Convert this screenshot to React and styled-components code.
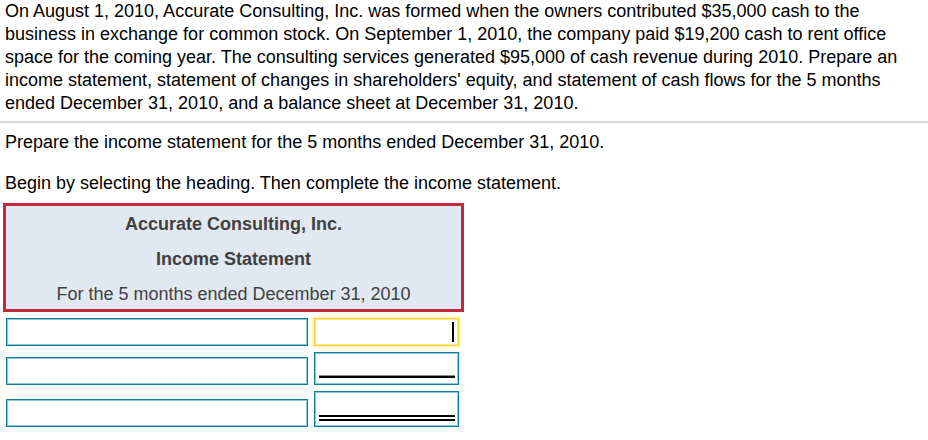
import React from 'react';
import styled, { createGlobalStyle } from "styled-components"

const GlobalStyle = createGlobalStyle`
    body {
        margin: 0;
        background: #ffffff;
        font-family: Arial, "Liberation Sans", sans-serif;
        color: #000000;
    }
`

const Page = styled.div`
    width: 928px;
    height: 440px;
    overflow: hidden;
`

const Problem = styled.p`
    margin: 0;
    padding: 0 5px;
    font-size: 18px;
    line-height: 23px;
`

const Divider = styled.hr`
    margin: 6px 0 0 0;
    border: 0;
    border-top: 2px solid #d3d6e0;
`

const Instruction = styled.p`
    margin: ${props => props.$top}px 0 0 0;
    padding: 0 5px;
    font-size: 18px;
    line-height: 23px;
`

const HeadingBox = styled.div`
    margin: 8px 0 0 3px;
    width: 461px;
    height: 109px;
    box-sizing: border-box;
    border: 3px solid #c4283b;
    background: #e1e8f2;
    padding: 1px 0 0 0;
    display: flex;
    flex-direction: column;
`

const HeadingLine = styled.div`
    height: ${props => props.$h}px;
    line-height: 35px;
    text-align: center;
    font-size: 18px;
    font-weight: ${props => props.$bold ? 700 : 400};
    color: #404040;
    white-space: nowrap;
`

const Rows = styled.div`
    margin: 6px 0 0 6px;
    display: flex;
    flex-direction: column;
    gap: 6px;
`

const Row = styled.div`
    display: flex;
    align-items: flex-end;
    gap: 6px;
`

const Field = styled.div`
    box-sizing: border-box;
    width: ${props => props.$width}px;
    height: ${props => props.$height}px;
    border: 1px solid #0e7c9c;
    box-shadow: inset 0 0 0 1px #8fc6d8;
    background: #ffffff;
`

const AmountField = styled(Field)`
    display: flex;
    flex-direction: column;
    justify-content: flex-end;
    padding: 0 3px ${props => props.$rulePad}px 4px;
`

const FocusField = styled.div`
    box-sizing: border-box;
    width: 145px;
    height: 28px;
    border: 1px solid #f2d43c;
    box-shadow: 0 0 3px 1px #fbe98a, inset 0 0 0 1px #fbe98a;
    background: #ffffff;
    display: flex;
    align-items: center;
    justify-content: flex-end;
    padding-right: 4px;
`

const Caret = styled.span`
    width: 2px;
    height: 20px;
    background: #000000;
`

const SingleRule = styled.div`
    border-top: 1px solid #8a8a8a;
    border-bottom: 2px solid #000000;
`

const DoubleRule = styled.div`
    height: 2px;
    border-top: 2px solid #000000;
    border-bottom: 2px solid #000000;
`

const App = () => {
    return (
        <Page>
            <GlobalStyle />
            <Problem>
                On August 1, 2010, Accurate Consulting, Inc. was formed when the owners contributed $35,000 cash to the
                business in exchange for common stock. On September 1, 2010, the company paid $19,200 cash to rent office
                space for the coming year. The consulting services generated $95,000 of cash revenue during 2010. Prepare an
                income statement, statement of changes in shareholders' equity, and statement of cash flows for the 5 months
                ended December 31, 2010, and a balance sheet at December 31, 2010.
            </Problem>
            <Divider />
            <Instruction $top={8}>Prepare the income statement for the 5 months ended December 31, 2010.</Instruction>
            <Instruction $top={18}>Begin by selecting the heading. Then complete the income statement.</Instruction>
            <HeadingBox>
                <HeadingLine $bold $h={35}>Accurate Consulting, Inc.</HeadingLine>
                <HeadingLine $bold $h={35}>Income Statement</HeadingLine>
                <HeadingLine $h={32}>For the 5 months ended December 31, 2010</HeadingLine>
            </HeadingBox>
            <Rows>
                <Row>
                    <Field $width={302} $height={28} />
                    <FocusField>
                        <Caret />
                    </FocusField>
                </Row>
                <Row>
                    <Field $width={302} $height={28} />
                    <AmountField $width={145} $height={33} $rulePad={6}>
                        <SingleRule />
                    </AmountField>
                </Row>
                <Row>
                    <Field $width={302} $height={28} />
                    <AmountField $width={145} $height={36} $rulePad={5}>
                        <DoubleRule />
                    </AmountField>
                </Row>
            </Rows>
        </Page>
    );
}

export default App;
